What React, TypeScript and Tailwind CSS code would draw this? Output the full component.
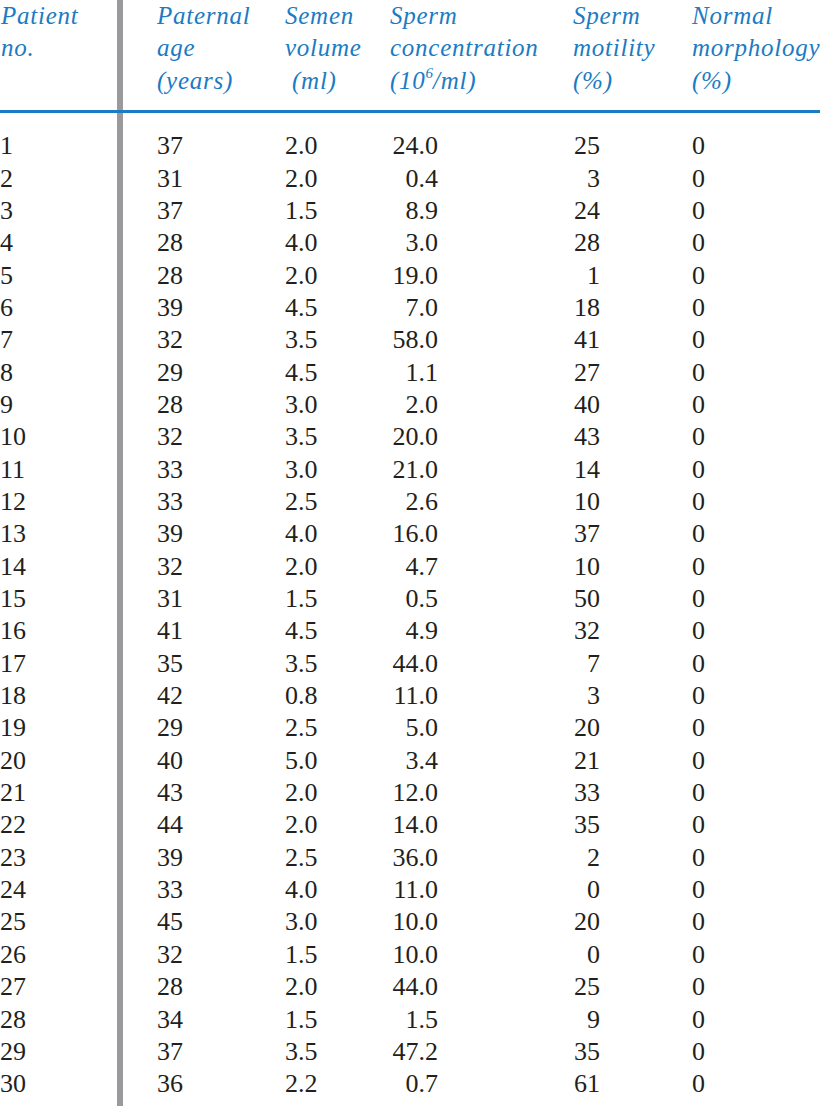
import React from "react";

const rows: [number, number, string, string, number, number][] = [
  [1, 37, "2.0", "24.0", 25, 0],
  [2, 31, "2.0", "0.4", 3, 0],
  [3, 37, "1.5", "8.9", 24, 0],
  [4, 28, "4.0", "3.0", 28, 0],
  [5, 28, "2.0", "19.0", 1, 0],
  [6, 39, "4.5", "7.0", 18, 0],
  [7, 32, "3.5", "58.0", 41, 0],
  [8, 29, "4.5", "1.1", 27, 0],
  [9, 28, "3.0", "2.0", 40, 0],
  [10, 32, "3.5", "20.0", 43, 0],
  [11, 33, "3.0", "21.0", 14, 0],
  [12, 33, "2.5", "2.6", 10, 0],
  [13, 39, "4.0", "16.0", 37, 0],
  [14, 32, "2.0", "4.7", 10, 0],
  [15, 31, "1.5", "0.5", 50, 0],
  [16, 41, "4.5", "4.9", 32, 0],
  [17, 35, "3.5", "44.0", 7, 0],
  [18, 42, "0.8", "11.0", 3, 0],
  [19, 29, "2.5", "5.0", 20, 0],
  [20, 40, "5.0", "3.4", 21, 0],
  [21, 43, "2.0", "12.0", 33, 0],
  [22, 44, "2.0", "14.0", 35, 0],
  [23, 39, "2.5", "36.0", 2, 0],
  [24, 33, "4.0", "11.0", 0, 0],
  [25, 45, "3.0", "10.0", 20, 0],
  [26, 32, "1.5", "10.0", 0, 0],
  [27, 28, "2.0", "44.0", 25, 0],
  [28, 34, "1.5", "1.5", 9, 0],
  [29, 37, "3.5", "47.2", 35, 0],
  [30, 36, "2.2", "0.7", 61, 0],
];

const head =
  "text-[25px] leading-[32.4px] italic tracking-[0.75px] text-[#1b7bc3] whitespace-nowrap";
const data = "text-[26px] leading-[32.35px] text-[#231f20] whitespace-nowrap";

export default function App() {
  return (
    <div
      className="w-[823px] h-[1106px] overflow-hidden bg-white"
      style={{ fontFamily: '"Liberation Serif", "Times New Roman", serif' }}
    >
      <div className="grid grid-cols-[117px_6px_162px_105px_183px_119px_1fr] grid-rows-[auto_auto_1fr] h-full">
        {/* header */}
        <div className={`col-start-1 row-start-1 pl-[1px] ${head}`}>
          Patient
          <br />
          no.
        </div>
        <div className="col-start-2 row-start-1 row-span-3 bg-[#9a9a9c]" />
        <div className={`col-start-3 row-start-1 pl-[34px] ${head}`}>
          Paternal
          <br />
          age
          <br />
          (years)
        </div>
        <div className={`col-start-4 row-start-1 ${head}`}>
          Semen
          <br />
          volume
          <br />
          &nbsp;(ml)
        </div>
        <div className={`col-start-5 row-start-1 ${head}`}>
          Sperm
          <br />
          concentration
          <br />
          (10
          <sup className="text-[15px] -top-[0.7em] tracking-normal">6</sup>
          /ml)
        </div>
        <div className={`col-start-6 row-start-1 ${head}`}>
          Sperm
          <br />
          motility
          <br />
          (%)
        </div>
        <div className={`col-start-7 row-start-1 ${head}`}>
          Normal
          <br />
          morphology
          <br />
          (%)
        </div>

        {/* rule */}
        <div className="col-start-1 col-end-8 row-start-2 mt-[13px] mb-[17px] h-[3px] w-[820px] bg-[#1b7bc3]" />

        {/* data */}
        <div className={`col-start-1 row-start-3 ${data}`}>
          {rows.map((r) => (
            <div key={r[0]}>{r[0]}</div>
          ))}
        </div>
        <div className={`col-start-3 row-start-3 pl-[34px] ${data}`}>
          {rows.map((r) => (
            <div key={r[0]}>{r[1]}</div>
          ))}
        </div>
        <div className={`col-start-4 row-start-3 ${data}`}>
          {rows.map((r) => (
            <div key={r[0]}>{r[2]}</div>
          ))}
        </div>
        <div className={`col-start-5 row-start-3 ${data}`}>
          <div className="w-[48px] text-right">
            {rows.map((r) => (
              <div key={r[0]}>{r[3]}</div>
            ))}
          </div>
        </div>
        <div className={`col-start-6 row-start-3 ${data}`}>
          <div className="w-[27px] text-right">
            {rows.map((r) => (
              <div key={r[0]}>{r[4]}</div>
            ))}
          </div>
        </div>
        <div className={`col-start-7 row-start-3 ${data}`}>
          {rows.map((r) => (
            <div key={r[0]}>{r[5]}</div>
          ))}
        </div>
      </div>
    </div>
  );
}
